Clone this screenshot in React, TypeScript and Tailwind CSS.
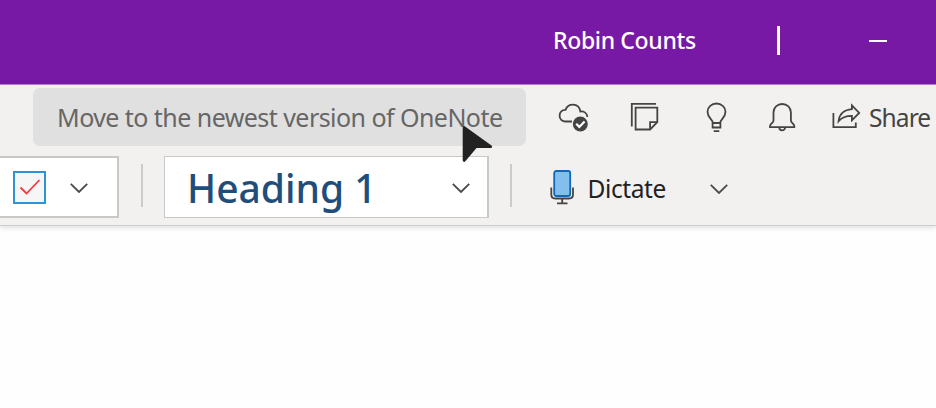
import React from "react";

const Chevron = ({ className = "" }: { className?: string }) => (
  <svg viewBox="0 0 18 10" className={`h-[10px] w-[18px] shrink-0 ${className}`} fill="none" stroke="#4a4a4a" strokeWidth="1.8">
    <path d="M0.8 0.8 9 9 17.2 0.8" />
  </svg>
);

const CloudCheckIcon = () => (
  <svg viewBox="0 0 36 34" className="ml-[30px] h-[34px] w-9 shrink-0" fill="none" stroke="#444" strokeWidth="1.8">
    <path d="M16 21.5H9.5C6 21.5 3.6 19 3.6 15.7c0-3.5 2.5-6 5.9-5.8C10.6 6.6 13.4 4.6 17 4.6c3.9 0 6.7 2.6 7.4 6.9 3.7-.3 6.7 1.8 7 5.5" />
    <circle cx="24.3" cy="24" r="7.5" fill="#444" stroke="none" />
    <path d="m20.2 23.8 3.1 3.1 5.3-5.4" stroke="#fff" strokeWidth="2.2" />
  </svg>
);

const NotesIcon = () => (
  <svg viewBox="0 0 34 34" className="-mt-[2px] ml-9 h-[34px] w-[34px] shrink-0" fill="none" stroke="#444" strokeWidth="1.8">
    <path d="M3.8 27.5V4.8H28" />
    <path d="M7.6 8.6h21.7v14.5l-7.2 7.4H7.6z" />
    <path d="M22.1 30.2v-7.1h7" />
  </svg>
);

const BulbIcon = () => (
  <svg viewBox="0 0 26 34" className="-mt-[2px] ml-[42px] h-[34px] w-[26px] shrink-0" fill="none" stroke="#444" strokeWidth="1.8">
    <path d="M8.6 28.5v-5.3c0-2.5-5.1-4.7-5.1-10.4C3.5 8.2 7.7 4.5 12.5 4.500s9 3.700 9 8.300c0 5.700-5.100 7.900-5.100 10.400v5.300z" />
    <path d="M8.6 24h7.8M9.7 32.200h5.6" />
  </svg>
);

const BellIcon = () => (
  <svg viewBox="0 0 30 34" className="-mt-[2px] ml-[37px] h-[34px] w-[30px] shrink-0" fill="none" stroke="#444" strokeWidth="1.8">
    <path d="M6.5 21.500v-8C6.500 8.500 10.300 5 15.200 5s8.700 3.500 8.700 8.500v8c0 2.300 3.400 3.500 3.400 5.500v1.200H3V27c0-2 3.500-3.200 3.500-5.500z" />
    <path d="M12.3 28.500c0 3.800 5.800 3.800 5.800 0" />
  </svg>
);

const ShareIcon = () => (
  <svg viewBox="0 0 32 30" className="-mt-[2px] ml-[33px] h-[30px] w-8 shrink-0" fill="none" stroke="#444" strokeWidth="1.8">
    <path d="M3.4 12v14.2h22.4v-4.6" />
    <path d="M21.9 4.4 29.2 11.9l-7.3 7.4v-4.5c-5.7 0-10 1.200-13.300 5.300.7-6.800 5.600-11.400 13.300-11.900z" />
  </svg>
);

const MicIcon = () => (
  <svg viewBox="0 0 26 36" className="ml-[37px] h-9 w-[26px] shrink-0" fill="none" stroke="#444" strokeWidth="1.8">
    <rect x="5.2" y="2" width="16" height="25" rx="2" fill="#83beec" stroke="#0f68b8" />
    <path d="M2.3 18.500v7q0 4 4 4H20q4 0 4-4v-7M13.200 29.500v4.800M8 34.300h10.500" />
  </svg>
);

const Divider = () => <div className="-mt-[4px] h-[43px] w-[1.5px] shrink-0 bg-[#cbcbcb]" />;

const Cursor = () => (
  <svg viewBox="0 0 34 40" className="absolute top-[124px] left-[460px] h-10 w-[34px]">
    <path d="M4.2 3.6 30.6 22.6H15.8L4.2 36.3z" fill="#222" stroke="#222" strokeWidth="3" strokeLinejoin="round" />
  </svg>
);

export default function App() {
  return (
    <div className="relative h-[408px] w-[936px] overflow-hidden bg-[#fefefe] font-['Noto_Sans',sans-serif] whitespace-nowrap">
      <header className="flex h-[85px] items-center border-b border-[#b77ed8] bg-[#7719a5] pb-[3px] text-white">
        <span className="-mt-px ml-[553px] w-[225px] text-[23px] font-medium tracking-[-0.35px]">Robin Counts</span>
        <div className="-ml-[1px] h-[29px] w-[3px] bg-white" />
        <div className="ml-[89px] h-[2px] w-[18px] bg-white" />
      </header>

      <div className="h-[141px] border-b border-[#cfcfcf] bg-[#f2f1f0] pt-[3px] shadow-[0_2px_5px_rgba(0,0,0,0.12)]">
        <div className="flex h-[58px] items-center">
          <button className="ml-[33px] h-[58px] w-[493px] shrink-0 rounded-[7px] bg-[#e0e0e0] pt-px pl-6 text-left text-[25px] tracking-[-0.55px] text-[#666]">
            Move to the newest version of OneNote
          </button>
          <CloudCheckIcon />
          <NotesIcon />
          <BulbIcon />
          <BellIcon />
          <ShareIcon />
          <span className="mt-[2px] ml-[7px] text-[24.5px] tracking-[-0.9px] text-[#444]">Share</span>
        </div>

        <div className="mt-[10px] flex h-[62px] items-center">
          <div className="flex h-[62px] w-[119px] shrink-0 items-center border-2 border-l-0 border-[#c8c8c6] bg-white">
            <div className="ml-[13px] flex h-[33px] w-[33px] items-center justify-center border-2 border-[#2f93d4] bg-[#f6f6f6]">
              <svg viewBox="0 0 22 18" className="h-[18px] w-[22px]" fill="none" stroke="#f03a3e" strokeWidth="1.8">
                <path d="m1.5 9.5 6 6L20.5 2" />
              </svg>
            </div>
            <Chevron className="mt-px ml-6" />
          </div>
          <div className="w-[22px] shrink-0" />
          <Divider />
          <div className="ml-[21.5px] flex h-[62px] w-[325px] shrink-0 items-center border border-r-2 border-[#c8c8c6] bg-white">
            <span className="mt-[3px] ml-[22px] w-[265px] text-[39px] font-medium text-[#1e4e79]">Heading 1</span>
            <Chevron className="mt-px" />
          </div>
          <div className="w-[21px] shrink-0" />
          <Divider />
          <MicIcon />
          <span className="mt-[5px] ml-[13px] w-[122px] text-[24.5px] tracking-[-0.4px] text-[#222]">Dictate</span>
          <Chevron className="mt-[4px]" />
        </div>
      </div>

      <Cursor />
    </div>
  );
}
